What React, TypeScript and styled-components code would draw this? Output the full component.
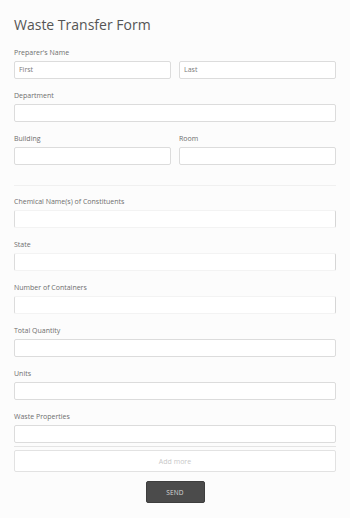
import React from "react";
import styled, { createGlobalStyle } from "styled-components";

const Global = createGlobalStyle`
  html, body { margin: 0; padding: 0; background: #fcfcfc; }
  body { font-family: "Open Sans", "Liberation Sans", sans-serif; }
  * { box-sizing: border-box; }
`;

const Page = styled.div`
  width: 350px;
  min-height: 518px;
  padding: 15px 14px 14px 14px;
  display: flex;
  flex-direction: column;
  background: #fcfcfc;
`;

const Title = styled.h1`
  margin: 0 0 13px 0;
  font-size: 14px;
  line-height: 20px;
  font-weight: 400;
  color: #555;
`;

const Fields = styled.div`
  display: flex;
  flex-direction: column;
  gap: 12px;
`;

const Row = styled.div`
  display: grid;
  grid-template-columns: 1fr 1fr;
  column-gap: 8px;
`;

const Field = styled.div`
  display: flex;
  flex-direction: column;
  min-width: 0;
`;

const Label = styled.label`
  font-size: 7px;
  line-height: 10px;
  color: #6e6e6e;
  margin-bottom: 3px;
  white-space: nowrap;
`;

const Input = styled.div<{ $faint?: boolean }>`
  height: 18px;
  background: #fff;
  border: 1px solid #dcdcdc;
  border-color: ${(p) => (p.$faint ? "#f3f3f3 #d6d6d6 #f3f3f3 #dcdcdc" : "#dcdcdc")};
  border-radius: 2px;
  padding: 0 4px;
  font-size: 7px;
  line-height: 16px;
  color: #7a7a7a;
`;

const Divider = styled.hr<{ $top: number; $bottom: number; $color: string }>`
  border: none;
  border-top: 1px solid ${(p) => p.$color};
  margin: ${(p) => p.$top}px 0 ${(p) => p.$bottom}px 0;
`;

const AddMore = styled.div`
  height: 22px;
  background: #fff;
  border: 1px solid #e2e2e2;
  border-radius: 2px;
  display: flex;
  align-items: center;
  justify-content: center;
  font-size: 7px;
  color: #c8c8c8;
`;

const ButtonRow = styled.div`
  display: flex;
  justify-content: center;
  margin-top: 9px;
`;

const Send = styled.button`
  width: 59px;
  height: 22px;
  background: #4b4b4b;
  border: 1px solid #3e3e3e;
  border-radius: 2px;
  color: #d8d8d8;
  font-family: "Open Sans", "Liberation Sans", sans-serif;
  font-size: 6.5px;
  letter-spacing: 0.2px;
  padding: 0;
`;

type F = { label: string; faint?: boolean };

const lower: F[] = [
  { label: "Chemical Name(s) of Constituents", faint: true },
  { label: "State", faint: true },
  { label: "Number of Containers", faint: true },
  { label: "Total Quantity" },
  { label: "Units" },
  { label: "Waste Properties" },
];

export default function App() {
  return (
    <>
      <Global />
      <Page>
        <Title>Waste Transfer Form</Title>
        <Fields>
          <Row>
            <Field>
              <Label>Preparer's Name</Label>
              <Input>First</Input>
            </Field>
            <Field>
              <Label>&nbsp;</Label>
              <Input>Last</Input>
            </Field>
          </Row>
          <Field>
            <Label>Department</Label>
            <Input />
          </Field>
          <Row>
            <Field>
              <Label>Building</Label>
              <Input />
            </Field>
            <Field>
              <Label>Room</Label>
              <Input />
            </Field>
          </Row>
        </Fields>
        <Divider $top={20} $bottom={11} $color="#f0f0f0" />
        <Fields>
          {lower.map((f) => (
            <Field key={f.label}>
              <Label>{f.label}</Label>
              <Input $faint={f.faint} />
            </Field>
          ))}
        </Fields>
        <Divider $top={3} $bottom={3} $color="#e4e4e4" />
        <AddMore>Add more</AddMore>
        <ButtonRow>
          <Send>SEND</Send>
        </ButtonRow>
      </Page>
    </>
  );
}
